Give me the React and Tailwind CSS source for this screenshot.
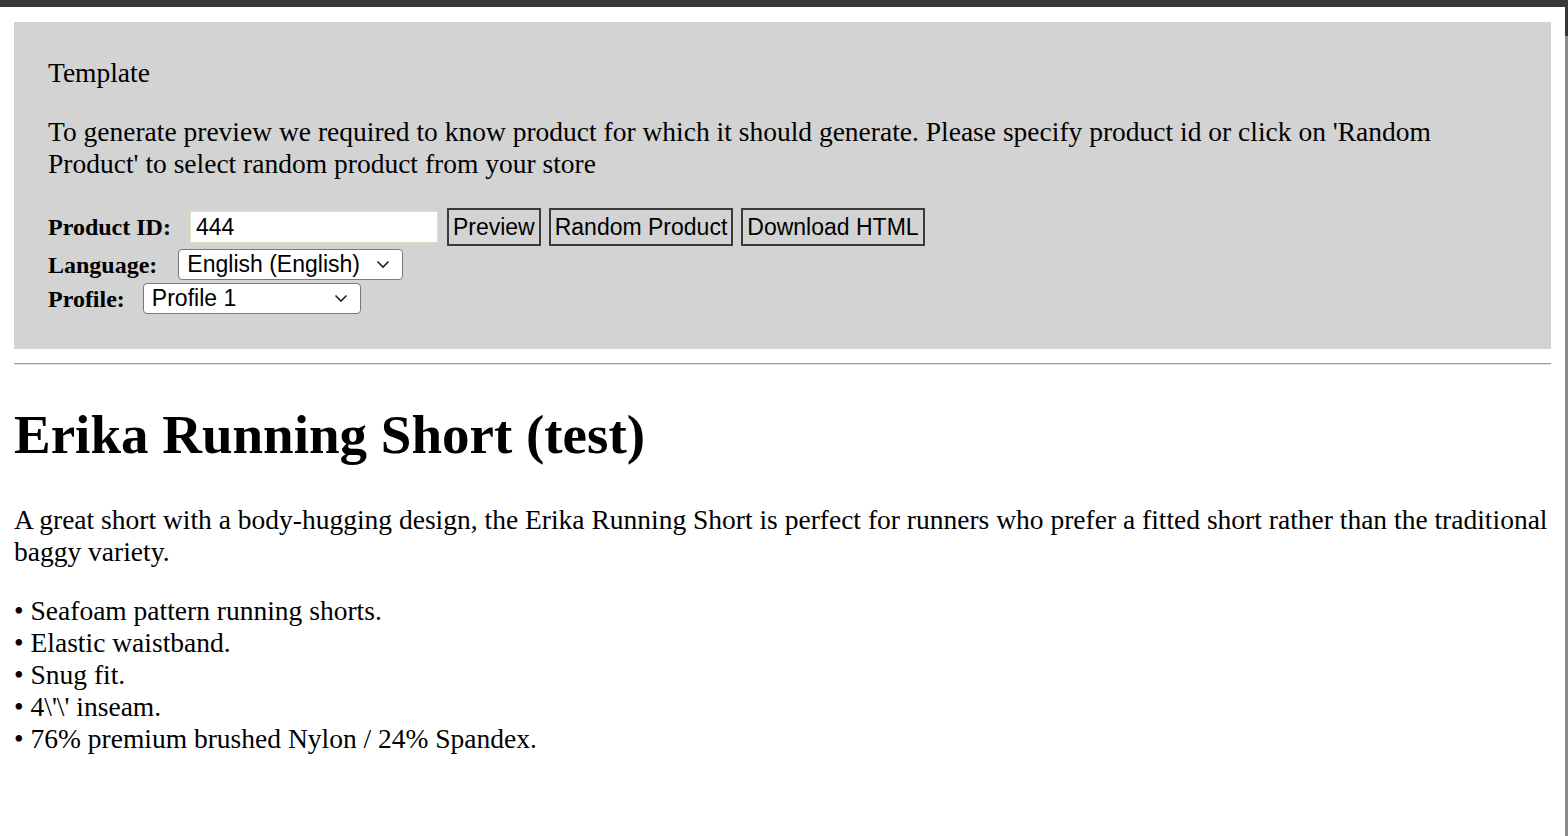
import React from 'react';

const serif = { fontFamily: '"Liberation Serif", "Times New Roman", serif' };
const sans = { fontFamily: '"Liberation Sans", Arial, sans-serif' };

const features = [
  'Seafoam pattern running shorts.',
  'Elastic waistband.',
  'Snug fit.',
  "4\\'\\' inseam.",
  '76% premium brushed Nylon / 24% Spandex.',
];

const Chevron = () => (
  <svg width="14" height="9" viewBox="0 0 14 9" className="shrink-0">
    <path d="M1.5 1.5 L7 7 L12.5 1.5" fill="none" stroke="#222" strokeWidth="1.6" />
  </svg>
);

const FakeSelect = ({ value, width }) => (
  <div
    className="flex h-[31px] items-center justify-between rounded-[4px] border border-[#7a7a7a] bg-white pl-[8px] pr-[12px] text-[23px] text-black"
    style={{ ...sans, width }}
  >
    <span className="leading-none">{value}</span>
    <Chevron />
  </div>
);

const Button = ({ children }) => (
  <button
    className="h-[38px] border-2 border-[#3a3a3a] bg-[#d3d3d3] px-[4px] text-[23px] leading-none text-black"
    style={sans}
  >
    {children}
  </button>
);

export default function App() {
  return (
    <div className="flex min-h-screen bg-white text-black" style={serif}>
      <div className="flex-1">
        <div className="h-[7px] bg-[#36373b]" />
        <div className="px-[14px] pt-[15px]">
          {/* Settings panel */}
          <div className="bg-[#d3d3d3] px-[34px] pb-[35px] pt-[35px] text-[27.5px] leading-[32px]">
            <div>Template</div>
            <p className="mt-[27px]">
              To generate preview we required to know product for which it should generate. Please specify product id or click on 'Random Product' to select random product from your store
            </p>

            <div className="mt-[28px] flex h-[38px] items-center">
              <b className="mr-[19px] text-[24px] leading-none">Product ID:</b>
              <div
                className="flex h-[32px] w-[248px] items-center border border-[#e6dcc4] bg-white px-[5px] text-[23px]"
                style={sans}
              >
                444
              </div>
              <div className="ml-[9px] flex gap-[8px]">
                <Button>Preview</Button>
                <Button>Random Product</Button>
                <Button>Download HTML</Button>
              </div>
            </div>

            <div className="mt-[3px] flex h-[31px] items-center">
              <b className="mr-[21px] text-[24px] leading-none">Language:</b>
              <FakeSelect value="English (English)" width={225} />
            </div>

            <div className="mt-[3px] flex h-[31px] items-center">
              <b className="mr-[18px] text-[24px] leading-none">Profile:</b>
              <FakeSelect value="Profile 1" width={218} />
            </div>
          </div>

          <hr className="mt-[14px] border-t border-b border-t-[#9a9a9a] border-b-[#e4e4e4]" />

          {/* Product preview */}
          <h1 className="mt-[38px] text-[55px] font-bold leading-[64px]">Erika Running Short (test)</h1>
          <p className="mt-[37px] text-[27.5px] leading-[32px]">
            A great short with a body-hugging design, the Erika Running Short is perfect for runners who prefer a fitted short rather than the traditional baggy variety.
          </p>
          <ul className="mt-[27px] text-[27.5px] leading-[32px]">
            {features.map((f) => (
              <li key={f}>• {f}</li>
            ))}
          </ul>
        </div>
      </div>
      <div className="flex w-[3px] flex-col">
        <div className="h-[36px] bg-[#36373b]" />
        <div className="flex-1 bg-[#8c8c8c]" />
      </div>
    </div>
  );
}
